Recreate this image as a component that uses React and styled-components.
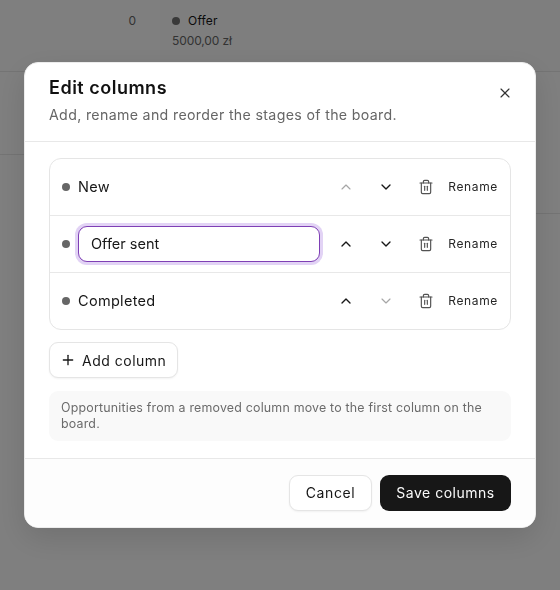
import React from "react";
import styled, { createGlobalStyle } from "styled-components";
import { ChevronUp, ChevronDown, Trash2, X, Plus } from "lucide-react";

const Global = createGlobalStyle`
  * { box-sizing: border-box; }
  html, body { margin: 0; padding: 0; height: 100%; overflow: hidden; }
  body { font-family: "Inter", "Open Sans", sans-serif; background: #fff; color: #171717; }
`;

const Board = styled.div`
  height: 590px;
  background: #fff;
  overflow: hidden;
  display: grid;
  grid-template-columns: 160px 1fr;
  align-content: start;
`;
const LeftCell = styled.div`
  height: 72px;
  border-bottom: 1px solid #e8e8e8;
  padding: 13px 24px 0 0;
  text-align: right;
  font-size: 12px;
  line-height: 15px;
  color: #666;
`;
const StageCell = styled.div`
  height: 72px;
  border-bottom: 1px solid #e8e8e8;
  padding: 12px 12px 0;
  background: #fdfdfd;
`;
const LowerLeft = styled.div`
  height: 83px;
  border-bottom: 1px solid #e8e8e8;
`;
const LowerRight = styled.div`
  height: 142px;
  border-bottom: 1px solid #e8e8e8;
`;
const StageName = styled.div`
  display: flex;
  align-items: center;
  gap: 8px;
  font-size: 12px;
  line-height: 17px;
  letter-spacing: 0.2px;
  color: #171717;
`;
const StageDot = styled.span`
  width: 8px;
  height: 8px;
  border-radius: 50%;
  background: #737373;
`;
const StageValue = styled.div`
  margin-top: 3px;
  font-size: 12px;
  line-height: 17px;
  letter-spacing: -0.1px;
  color: #666;
`;
const Overlay = styled.div`
  position: fixed;
  inset: 0;
  background: rgba(0, 0, 0, 0.5);
  display: flex;
  align-items: center;
  justify-content: center;
`;
const Modal = styled.div`
  position: relative;
  width: 512px;
  height: 466px;
  background: #fff;
  border-radius: 14px;
  border: 1px solid #ececec;
  box-shadow: 0 10px 30px rgba(0, 0, 0, 0.12);
  display: flex;
  flex-direction: column;
  overflow: hidden;
`;
const Header = styled.header`
  height: 79px;
  padding: 12px 24px 0;
  border-bottom: 1px solid #e8e8e8;
`;
const Title = styled.h2`
  margin: 0;
  font-size: 18px;
  line-height: 26px;
  font-weight: 600;
  letter-spacing: 0.5px;
  color: #111;
`;
const Subtitle = styled.p`
  margin: 3px 0 0;
  font-size: 14.2px;
  line-height: 22px;
  letter-spacing: 0.33px;
  color: #666;
`;
const CloseButton = styled.button`
  position: absolute;
  top: 21px;
  right: 21px;
  width: 18px;
  height: 18px;
  padding: 0;
  border: 0;
  background: none;
  color: #333;
  display: flex;
  align-items: center;
  justify-content: center;
`;
const Body = styled.div`
  flex: 1;
  padding: 16px 24px;
  display: flex;
  flex-direction: column;
  align-items: flex-start;
`;
const List = styled.div`
  width: 100%;
  border: 1px solid #e5e5e5;
  border-radius: 12px;
  overflow: hidden;
`;
const Row = styled.div`
  height: 57px;
  padding: 0 12px;
  display: flex;
  align-items: center;
  border-top: 1px solid #e8e8e8;
  &:first-child { height: 56px; border-top: 0; }
`;
const Dot = styled.span`
  width: 8px;
  height: 8px;
  border-radius: 50%;
  background: #666;
  flex: none;
  margin-right: 8px;
`;
const Name = styled.span`
  font-size: 14.5px;
  letter-spacing: 0.3px;
  margin-top: -1px;
  color: #171717;
`;
const NameInput = styled.input`
  flex: none;
  width: 242px;
  height: 36px;
  padding: 0 12px 1px;
  border: 1px solid #7e3fb5;
  border-radius: 9px;
  outline: none;
  box-shadow: 0 0 0 3px #e2d3f5;
  font: inherit;
  font-size: 14.5px;
  color: #171717;
  background: #fff;
`;
const Controls = styled.div`
  flex: none;
  display: flex;
  align-items: center;
  margin-left: auto;
`;
const IconButton = styled.button`
  width: 40px;
  height: 32px;
  padding: 0;
  border: 0;
  background: none;
  display: flex;
  align-items: center;
  justify-content: center;
  color: ${(p) => (p.$off ? "#a6a6a6" : "#171717")};
`;
const TrashButton = styled(IconButton)`
  color: #525252;
`;
const RenameButton = styled.button`
  width: 52px;
  padding: 0 0 2px;
  border: 0;
  background: none;
  font: inherit;
  font-size: 12px;
  letter-spacing: 0.65px;
  color: #262626;
  white-space: nowrap;
  text-align: right;
`;
const AddButton = styled.button`
  margin-top: 12px;
  height: 36px;
  width: 129px;
  padding: 0 10px;
  border: 1px solid #e5e5e5;
  border-radius: 9px;
  background: #fff;
  box-shadow: 0 1px 2px rgba(0, 0, 0, 0.05);
  display: flex;
  align-items: center;
  gap: 6px;
  font: inherit;
  font-size: 14px;
  letter-spacing: 0.5px;
  color: #171717;
  white-space: nowrap;
`;
const Notice = styled.p`
  width: 100%;
  margin: 13px 0 0;
  height: 50px;
  padding: 9px 12px;
  background: #f9f9f9;
  border-radius: 9px;
  font-size: 12.4px;
  line-height: 16px;
  letter-spacing: 0.2px;
  color: #6b6b6b;
`;
const Footer = styled.footer`
  height: 69px;
  padding: 16px 24px 0;
  border-top: 1px solid #e8e8e8;
  background: #fdfdfd;
  display: flex;
  justify-content: flex-end;
  gap: 8px;
`;
const CancelButton = styled.button`
  width: 83px;
  height: 36px;
  padding: 0 0 2px;
  border: 1px solid #e5e5e5;
  border-radius: 9px;
  background: #fff;
  box-shadow: 0 1px 2px rgba(0, 0, 0, 0.05);
  font: inherit;
  font-size: 14px;
  letter-spacing: 0.6px;
  color: #171717;
`;
const SaveButton = styled.button`
  width: 131px;
  height: 36px;
  padding: 0 0 1px;
  border: 0;
  border-radius: 9px;
  background: #171717;
  font: inherit;
  font-size: 14px;
  letter-spacing: 0.5px;
  color: #fafafa;
`;

const columns = [
  { name: "New", upOff: true },
  { name: "Offer sent", editing: true },
  { name: "Completed", downOff: true },
];

export default function App() {
  return (
    <>
      <Global />
      <Board>
        <LeftCell>0</LeftCell>
        <StageCell>
          <StageName><StageDot />Offer</StageName>
          <StageValue>5000,00 zł</StageValue>
        </StageCell>
        <LowerLeft />
        <LowerRight />
      </Board>
      <Overlay>
        <Modal>
          <Header>
            <Title>Edit columns</Title>
            <Subtitle>Add, rename and reorder the stages of the board.</Subtitle>
          </Header>
          <CloseButton aria-label="Close"><X size={16} strokeWidth={1.75} /></CloseButton>
          <Body>
            <List>
              {columns.map((c) => (
                <Row key={c.name}>
                  <Dot />
                  {c.editing ? <NameInput defaultValue={c.name} /> : <Name>{c.name}</Name>}
                  <Controls>
                    <IconButton $off={c.upOff}><ChevronUp size={16} strokeWidth={c.upOff ? 1.75 : 2} /></IconButton>
                    <IconButton $off={c.downOff}><ChevronDown size={16} strokeWidth={c.downOff ? 1.75 : 2} /></IconButton>
                    <TrashButton><Trash2 size={16} strokeWidth={1.75} /></TrashButton>
                    <RenameButton>Rename</RenameButton>
                  </Controls>
                </Row>
              ))}
            </List>
            <AddButton><Plus size={16} strokeWidth={2} />Add column</AddButton>
            <Notice>Opportunities from a removed column move to the first column on the board.</Notice>
          </Body>
          <Footer>
            <CancelButton>Cancel</CancelButton>
            <SaveButton>Save columns</SaveButton>
          </Footer>
        </Modal>
      </Overlay>
    </>
  );
}
